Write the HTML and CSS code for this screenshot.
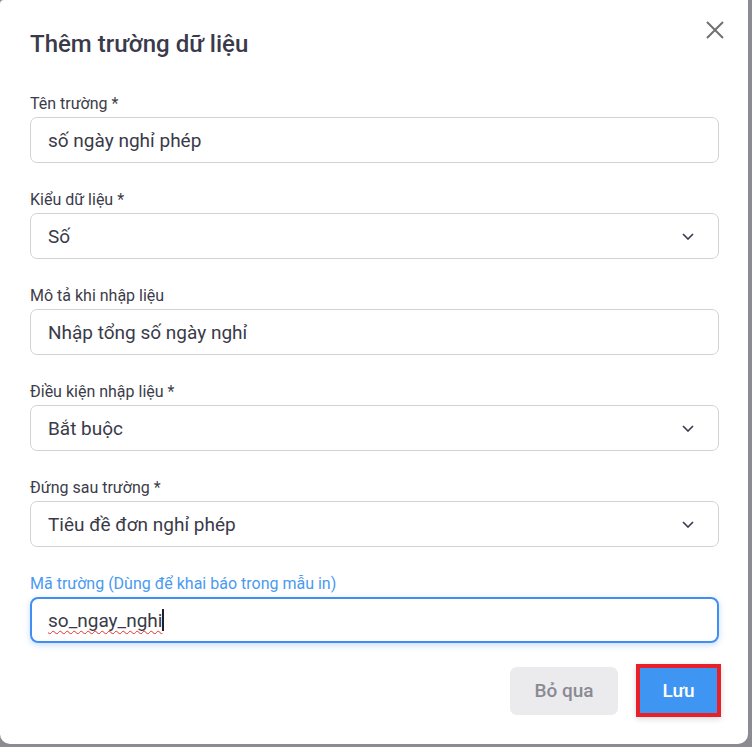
FILE: index.html
```html
<!DOCTYPE html>
<html lang="vi">
<head>
<meta charset="utf-8">
<title>Thêm trường dữ liệu</title>
<link rel="stylesheet" href="styles.css">
</head>
<body>
<div class="dialog">
  <div class="header">
    <h1 class="title">Thêm trường dữ liệu</h1>
    <button class="close" aria-label="Đóng">
      <svg width="18" height="18" viewBox="0 0 18 18"><path d="M1 1L17 17M17 1L1 17" stroke="#707070" stroke-width="2" fill="none"/></svg>
    </button>
  </div>
  <div class="form">
    <div class="field">
      <div class="label">Tên trường *</div>
      <div class="control"><span class="value">số ngày nghỉ phép</span></div>
    </div>
    <div class="field">
      <div class="label">Kiểu dữ liệu *</div>
      <div class="control select"><span class="value">Số</span><svg class="chev" width="12" height="7" viewBox="0 0 12 7"><path d="M1 1L6 6L11 1" stroke="#3a3a48" stroke-width="1.6" fill="none"/></svg></div>
    </div>
    <div class="field">
      <div class="label">Mô tả khi nhập liệu</div>
      <div class="control"><span class="value">Nhập tổng số ngày nghỉ</span></div>
    </div>
    <div class="field">
      <div class="label">Điều kiện nhập liệu *</div>
      <div class="control select"><span class="value">Bắt buộc</span><svg class="chev" width="12" height="7" viewBox="0 0 12 7"><path d="M1 1L6 6L11 1" stroke="#3a3a48" stroke-width="1.6" fill="none"/></svg></div>
    </div>
    <div class="field">
      <div class="label">Đứng sau trường *</div>
      <div class="control select"><span class="value">Tiêu đề đơn nghỉ phép</span><svg class="chev" width="12" height="7" viewBox="0 0 12 7"><path d="M1 1L6 6L11 1" stroke="#3a3a48" stroke-width="1.6" fill="none"/></svg></div>
    </div>
    <div class="field">
      <div class="label label-active">Mã trường (Dùng để khai báo trong mẫu in)</div>
      <div class="control control-active"><span class="value misspelled">so_ngay_nghi</span><span class="caret"></span></div>
    </div>
  </div>
  <div class="actions">
    <button class="btn btn-cancel">Bỏ qua</button>
    <button class="btn btn-save">Lưu</button>
  </div>
</div>
</body>
</html>
```
FILE: styles.css
```css
html, body {
  margin: 0;
  padding: 0;
}
body {
  background: #8b8b91;
  width: 752px;
  height: 747px;
  overflow: hidden;
  font-family: Roboto, "Noto Sans", sans-serif;
}
.dialog {
  width: 748px;
  height: 744px;
  background: #fff;
  border-radius: 0 0 10px 10px;
  border-top-left-radius: 4px;
  box-sizing: border-box;
  padding: 0 29px 0 30px;
  display: flex;
  flex-direction: column;
}
.header {
  display: flex;
  justify-content: space-between;
  align-items: flex-start;
  padding-top: 30px;
}
.title {
  margin: 0;
  font-size: 24px;
  line-height: 28px;
  font-weight: 500;
  color: #3a3a4a;
}
.close {
  border: 0;
  background: none;
  padding: 0;
  margin: -9px -5px 0 0;
  width: 18px;
  height: 18px;
  display: block;
  cursor: pointer;
}
.close svg { display: block; }
.form {
  margin-top: 36px;
  display: flex;
  flex-direction: column;
  gap: 27px;
}
.field {
  display: flex;
  flex-direction: column;
}
.label {
  font-size: 16px;
  line-height: 19px;
  color: #3c3c4a;
  margin-bottom: 4px;
}
.label-active { color: #4a9af0; }
.control {
  height: 46px;
  box-sizing: border-box;
  border: 1px solid #d3d3d6;
  border-radius: 7px;
  padding: 0 24px 0 17px;
  display: flex;
  align-items: center;
}
.value {
  font-size: 19px;
  color: #3a3a48;
}
.select { justify-content: space-between; }
.chev { display: block; }
.control-active {
  border: 2px solid #3f8ef0;
  padding-left: 16px;
  box-shadow: 0 2px 6px rgba(63, 142, 240, 0.3);
  border-radius: 8px;
}
.misspelled {
  text-decoration: underline wavy #e5322f;
  text-decoration-thickness: 1px;
  text-underline-offset: 3px;
  text-decoration-skip-ink: none;
}
.caret {
  width: 2px;
  height: 22px;
  background: #222;
}
.actions {
  margin-top: 21px;
  display: flex;
  justify-content: flex-end;
  align-items: center;
  gap: 18px;
  margin-right: -2px;
}
.btn {
  font-family: inherit;
  font-size: 19px;
  font-weight: 500;
  border-radius: 7px;
  cursor: pointer;
}
.btn-cancel {
  width: 108px;
  height: 48px;
  border: 0;
  background: #ebebed;
  color: #8a8a94;
}
.btn-save {
  width: 85px;
  height: 53px;
  border: 4px solid #e8202a;
  border-radius: 0;
  background: #3f95f2;
  color: #fff;
  box-shadow: 0 2px 6px rgba(0, 0, 0, 0.15);
}
```
